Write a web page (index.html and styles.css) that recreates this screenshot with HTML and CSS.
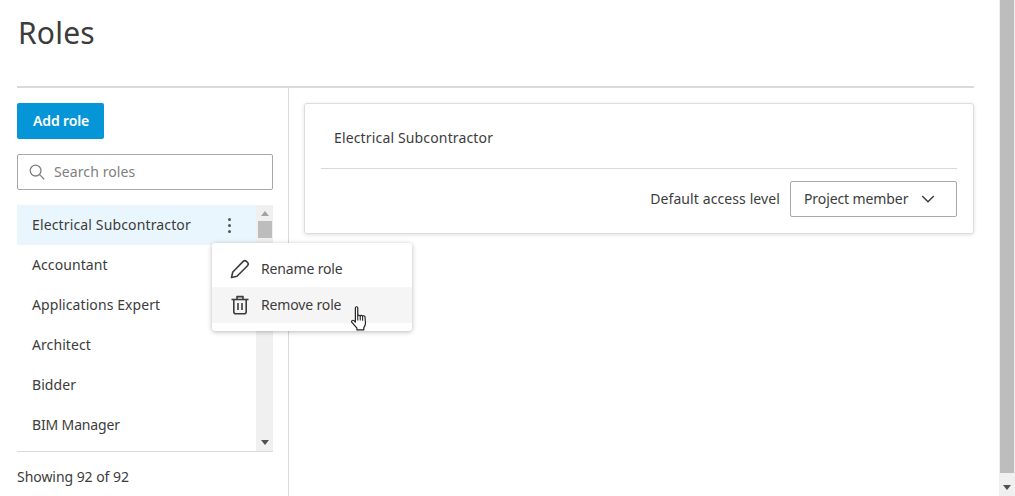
FILE: index.html
```html
<!DOCTYPE html>
<html lang="en">
<head>
<meta charset="utf-8">
<title>Roles</title>
<link rel="stylesheet" href="styles.css">
</head>
<body>
<div class="window">
  <main class="page">
    <h1 class="title">Roles</h1>
    <div class="columns">
      <aside class="side">
        <button class="add-btn">Add role</button>
        <label class="search">
          <svg class="search-icon" width="16" height="16" viewBox="0 0 16 16" fill="none" stroke="#808080" stroke-width="1.3"><circle cx="6.6" cy="6.6" r="5.4"/><path d="M10.6 10.6 15.2 15.2"/></svg>
          <span class="search-text">Search roles</span>
        </label>
        <div class="list-wrap">
          <ul class="list">
            <li class="item item-active"><span>Electrical Subcontractor</span>
              <span class="dots"><i></i><i></i><i></i></span>
            </li>
            <li class="item">Accountant</li>
            <li class="item">Applications Expert</li>
            <li class="item">Architect</li>
            <li class="item">Bidder</li>
            <li class="item item-tight">BIM Manager</li>
          </ul>
          <div class="list-bar">
            <span class="arrow-up"></span>
            <span class="list-thumb"></span>
            <span class="list-spacer"></span>
            <span class="arrow-down"></span>
          </div>
        </div>
        <div class="count">Showing 92 of 92</div>
      </aside>
      <section class="detail">
        <div class="card">
          <div class="card-title">Electrical Subcontractor</div>
          <div class="card-row">
            <span class="access-label">Default access level</span>
            <div class="select"><span class="select-text">Project member</span>
              <svg width="14" height="8" viewBox="0 0 14 8" fill="none" stroke="#3c3c3c" stroke-width="1.4"><path d="M1.2 1 7 6.8 12.8 1"/></svg>
            </div>
          </div>
        </div>
      </section>
    </div>
    <div class="menu">
      <div class="menu-item">
        <svg width="20" height="20" viewBox="0 0 20 20" fill="none" stroke="#3c3c3c" stroke-width="1.6" stroke-linejoin="round"><path d="M1.500 18.500 2.800 13 13.200 2.400a2.300 2.300 0 0 1 3.200 0l1.100 1.100a2.300 2.300 0 0 1 0 3.200L7 17.200Z"/></svg>
        <span class="menu-text">Rename role</span>
      </div>
      <div class="menu-item menu-item-hover">
        <svg width="20" height="20" viewBox="0 0 20 20" fill="none" stroke="#3c3c3c" stroke-width="1.6" stroke-linejoin="round"><path d="M1.500 4.500h17"/><path d="M7 4.500V1.600h6v2.900"/><path d="M3.800 4.500v12.200a2 2 0 0 0 2 2h8.400a2 2 0 0 0 2-2V4.500"/><path d="M8 8v7M12 8v7"/></svg>
        <span class="menu-text">Remove role</span>
      </div>
    </div>
    <svg class="cursor" width="16" height="25" viewBox="0.500 0 13.500 22.500" preserveAspectRatio="none"><path d="M4.200 1.600c0-1.300 2-1.300 2 0V9c.2-1 2-1 2.100.1.2-.9 1.900-.9 2 .2.300-.8 1.900-.7 2 .4l.4 5.200c.1 2.200-.7 3.600-1.400 4.600v2H5.500v-1.500L1.300 14.800c-.9-1.200.6-2.600 1.700-1.600l1.200 1.300Z" fill="#fff" stroke="#222" stroke-width="1" stroke-linejoin="round"/><path d="M6.200 9v4M8.300 9.100v4M10.300 9.300v4" stroke="#222" stroke-width=".9" fill="none"/></svg>
  </main>
  <div class="page-bar">
    <span class="page-thumb"></span>
    <span class="arrow-down page-arrow"></span>
  </div>
</div>
</body>
</html>
```
FILE: styles.css
```css
* { box-sizing: border-box; }
html, body { margin: 0; height: 100%; overflow: hidden; background: #fff; }
body { font-family: "Noto Sans", "Open Sans", sans-serif; font-size: 14px; color: #3c3c3c; }
.window { display: flex; height: 496px; width: 1015px; }
.page { position: relative; flex: 1; padding: 0 25px 0 17px; min-width: 0; }
.title { margin: 0; height: 86px; padding: 12px 0 0 1px; font-size: 30px; line-height: 41px; font-weight: 400; color: #3c3c3c; letter-spacing: .2px; }
.columns { display: flex; height: 410px; border-top: 2px solid #d9d9d9; }
.side { width: 272px; border-right: 1px solid #d9d9d9; padding: 15px 15px 0 0; flex: none; }
.add-btn { display: block; width: 87px; height: 36px; border: 0; border-radius: 2px; background: #0696d7; color: #fff; font: 600 14px/36px "Noto Sans", sans-serif; letter-spacing: -.15px; padding: 0 0 0 1px; }
.search { display: flex; align-items: center; height: 36px; margin-top: 15px; padding-left: 11px; border: 1px solid #a9a9a9; border-radius: 2px; }
.search-text { margin-left: 9px; padding-bottom: 2px; color: #808080; letter-spacing: .1px; }
.list-wrap { display: flex; height: 247px; margin-top: 15px; border-bottom: 1px solid #d9d9d9; }
.list { list-style: none; margin: 0; padding: 0; flex: 1; min-width: 0; }
.item { display: flex; align-items: center; justify-content: space-between; height: 40px; padding: 0 25px 2px 15px; letter-spacing: .08px; }
.item-active { background: #eaf6fd; letter-spacing: .14px; }
.item-tight { letter-spacing: -.15px; }
.dots { display: flex; flex-direction: column; gap: 3px; margin-top: 2px; }
.dots i { display: block; width: 3px; height: 3px; border-radius: 50%; background: #555; }
.list-bar { width: 17px; flex: none; display: flex; flex-direction: column; align-items: center; background: #f0f0f0; padding: 6px 0 6px; }
.arrow-up { width: 0; height: 0; border: 4px solid transparent; border-top: 0; border-bottom: 5px solid #a3a3a3; }
.arrow-down { width: 0; height: 0; border: 4px solid transparent; border-bottom: 0; border-top: 5px solid #505050; }
.list-thumb { width: 14px; height: 17px; margin-top: 5px; background: #bdbdbd; }
.list-spacer { flex: 1; }
.count { margin-top: 15px; line-height: 20px; letter-spacing: -.05px; }
.detail { flex: 1; padding: 15px 0 0 15px; min-width: 0; }
.card { height: 131px; border: 1px solid #dcdcdc; border-radius: 3px; box-shadow: 0 1px 4px rgba(0,0,0,.12); padding: 0 16px; }
.card-title { height: 65px; padding: 24px 0 0 13px; line-height: 20px; border-bottom: 1px solid #d9d9d9; letter-spacing: .15px; }
.card-row { display: flex; justify-content: flex-end; align-items: center; gap: 10px; margin-top: 12px; }
.access-label { padding-bottom: 2px; letter-spacing: .1px; }
.select { display: flex; align-items: center; justify-content: space-between; width: 167px; height: 36px; padding: 0 21px 0 13px; border: 1px solid #a9a9a9; border-radius: 2px; }
.select-text { padding-bottom: 2px; letter-spacing: -.1px; }
.menu { position: absolute; left: 212px; top: 243px; width: 200px; height: 88px; padding: 8px 0; background: #fff; border-radius: 3px; box-shadow: 0 1px 5px rgba(0,0,0,.28); }
.menu-item { display: flex; align-items: center; gap: 11px; height: 36px; padding-left: 18px; }
.menu-text { padding-bottom: 2px; letter-spacing: -.15px; }
.menu-item-hover { background: #f5f5f5; }
.cursor { position: absolute; left: 351px; top: 306px; }
.page-bar { width: 16px; flex: none; display: flex; flex-direction: column; align-items: center; background: #f0f0f0; padding: 0 0 6px; }
.page-thumb { width: 14px; height: 473px; background: #bdbdbd; }
.page-arrow { margin-top: auto; }
```
